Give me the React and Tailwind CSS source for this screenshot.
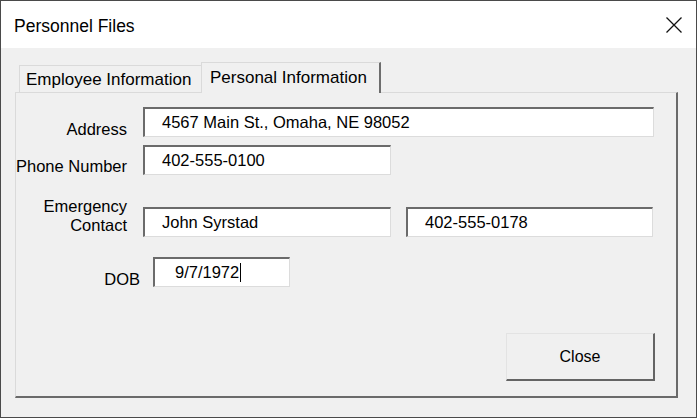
import React from 'react';

// Sunken text box, classic Windows look
const Field = ({ value, width, padLeft = 'pl-[17px]', caret = false }) => (
  <div
    className={`${width} h-[30px] bg-white border-t-2 border-l-2 border-r border-b border-t-[#6b6b6b] border-l-[#6b6b6b] border-r-[#dcdcdc] border-b-[#dcdcdc] flex items-center ${padLeft}`}
  >
    <span className="text-[16.5px] leading-[19px] text-black whitespace-nowrap">{value}</span>
    {caret && <span className="w-[1px] h-[19px] bg-black ml-[1px]" />}
  </div>
);

const App = () => {
  return (
    <div className="w-[698px] h-[420px] bg-white font-['Liberation_Sans',Arial,sans-serif] text-black">
      <div className="w-[697px] h-[418px] border border-[#4a4a4a] flex flex-col">
        {/* title bar */}
        <div className="h-[47px] bg-white flex items-center justify-between pl-[13px] pr-[14px]">
          <span className="text-[17.5px] leading-[20px] mt-[2px]">Personnel Files</span>
          <svg width="16" height="16" viewBox="0 0 16 16" className="mt-[1px]">
            <path d="M0.5 0.5 L15.5 15.5 M15.5 0.5 L0.5 15.5" stroke="#111" strokeWidth="1.3" fill="none" />
          </svg>
        </div>

        {/* body */}
        <div className="flex-1 bg-[#f0f0f0] pt-[14px] pl-[14px]">
          {/* tabs */}
          <div className="flex items-end h-[30px]">
            <div className="ml-[4px] w-[182px] h-[27px] border-t border-l border-[#dadada] bg-[#f0f0f0] pl-[6px] pt-[2px]">
              <span className="text-[17px] leading-[19px]">Employee Information</span>
            </div>
            <div className="relative z-10 w-[180px] h-[31px] mb-[-1px] bg-[#f0f0f0] border-t border-l border-[#dadada] border-r-2 border-r-[#6d6d6d] pl-[8px] pt-[3px]">
              <span className="text-[17px] leading-[19px]">Personal Information</span>
            </div>
          </div>

          {/* panel */}
          <div className="w-[663px] h-[306px] border-t border-l border-[#dadada] border-r-2 border-b-2 border-r-[#6a6a6a] border-b-[#6a6a6a] flex flex-col text-[16.5px] leading-[19px]">
            {/* Address */}
            <div className="flex h-[30px] mt-[14px]">
              <div className="w-[111px] h-[30px] text-right pt-[13px]">Address</div>
              <div className="ml-[16px]">
                <Field value="4567 Main St., Omaha, NE 98052" width="w-[511px]" />
              </div>
            </div>

            {/* Phone */}
            <div className="flex h-[30px] mt-[8px]">
              <div className="w-[111px] h-[30px] text-right pt-[12px] whitespace-nowrap">Phone Number</div>
              <div className="ml-[16px]">
                <Field value="402-555-0100" width="w-[248px]" />
              </div>
            </div>

            {/* Emergency contact */}
            <div className="flex items-end mt-[22px]">
              <div className="w-[111px] text-right mb-[2px]">
                Emergency
                <br />
                Contact
              </div>
              <div className="ml-[16px] flex gap-[15px]">
                <Field value="John Syrstad" width="w-[248px]" />
                <Field value="402-555-0178" width="w-[247px]" />
              </div>
            </div>

            {/* DOB */}
            <div className="flex h-[30px] mt-[20px]">
              <div className="w-[124px] h-[30px] text-right pt-[13px]">DOB</div>
              <div className="ml-[13px]">
                <Field value="9/7/1972" width="w-[137px]" padLeft="pl-[20px]" caret />
              </div>
            </div>

            {/* Close */}
            <div className="flex justify-end mt-[46px] pr-[21px]">
              <button className="w-[149px] h-[48px] bg-[#f0f0f0] border-t border-l border-t-[#e3e3e3] border-l-[#e3e3e3] border-r-2 border-b-2 border-r-[#646464] border-b-[#646464] text-[16px] leading-[19px] text-black">
                Close
              </button>
            </div>
          </div>
        </div>
      </div>
    </div>
  );
};

export default App;
